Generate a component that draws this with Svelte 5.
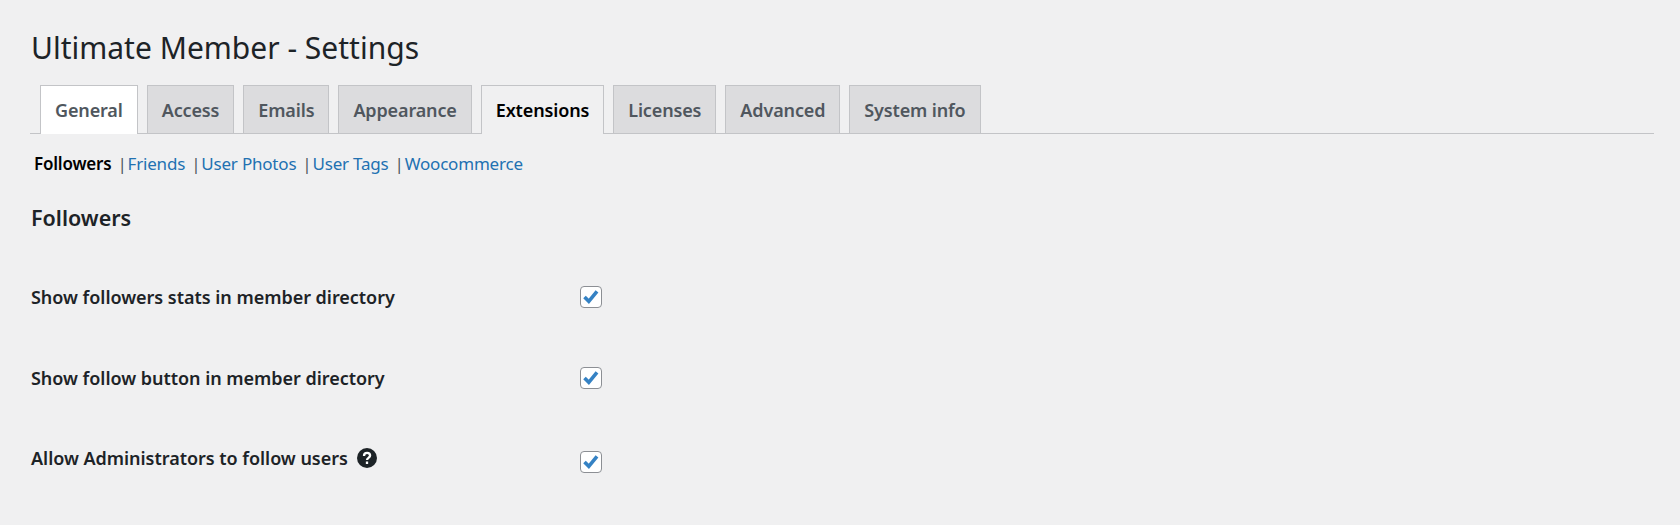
<script>
  const tabs = [
    { label: 'General', active: true },
    { label: 'Access' },
    { label: 'Emails' },
    { label: 'Appearance' },
    { label: 'Extensions', active: true, strong: true },
    { label: 'Licenses' },
    { label: 'Advanced' },
    { label: 'System info' }
  ];
  const subtabs = ['Friends', 'User Photos', 'User Tags', 'Woocommerce'];
  const fields = [
    { label: 'Show followers stats in member directory' },
    { label: 'Show follow button in member directory' },
    { label: 'Allow Administrators to follow users', help: true }
  ];
</script>

<div class="wrap">
  <h1>Ultimate Member - Settings</h1>

  <nav class="tabs">
    {#each tabs as tab}
      <a href="#tab" class="tab" class:active={tab.active} class:strong={tab.strong}>{tab.label}</a>
    {/each}
  </nav>

  <div class="subnav">
    <strong>Followers</strong>
    {#each subtabs as sub}
      <span class="sep">|</span><a href="#sub">{sub}</a>
    {/each}
  </div>

  <h2>Followers</h2>

  <div class="fields">
    {#each fields as field}
      <div class="row" class:has-help={field.help}>
        <div class="label">
          {field.label}
          {#if field.help}
            <svg class="help" viewBox="0 0 20 20" aria-hidden="true">
              <circle cx="10" cy="10" r="10" fill="#1d2327" />
              <path d="M10 15.9v-2.400M7 7.900c0-1.800 1.300-3 3.100-3s3 1.100 3 2.700c0 2.200-3.100 2.300-3.100 4.300" fill="none" stroke="#fff" stroke-width="2.300" />
            </svg>
          {/if}
        </div>
        <span class="check">
          <svg viewBox="0 0 20 20" aria-hidden="true">
            <path d="M3.500 10l4.300 4.300 8.200-10" fill="none" stroke="#3582c4" stroke-width="3.600" />
          </svg>
        </span>
      </div>
    {/each}
  </div>
</div>

<style>
  :global(body) {
    background: #f0f0f1;
    color: #1d2327;
    font-family: "Noto Sans", "Open Sans", sans-serif;
  }

  .wrap {
    height: 525px;
    overflow: hidden;
    padding: 0 26px 0 30px;
    box-sizing: border-box;
  }

  h1 {
    margin: 0;
    padding: 28px 0 0 1px;
    font-size: 30px;
    line-height: 40px;
    font-weight: 400;
  }

  .tabs {
    display: flex;
    gap: 9px;
    margin-top: 17px;
    padding-left: 10px;
    height: 48px;
    border-bottom: 1px solid #c3c4c7;
  }

  .tab {
    display: flex;
    align-items: center;
    padding: 0 14px;
    height: 48px;
    box-sizing: border-box;
    border: 1px solid #c3c4c7;
    border-bottom: none;
    background: #dcdcde;
    color: #50575e;
    font-size: 18px;
    font-weight: 600;
    letter-spacing: -0.14px;
    text-decoration: none;
  }

  .tab.active {
    height: 49px;
    background: #f0f0f1;
    color: #000;
  }

  .tab:first-child {
    background: #fff;
    color: #50575e;
  }

  .subnav {
    display: flex;
    align-items: center;
    height: 24px;
    margin-top: 17px;
    padding-left: 4px;
    font-size: 17px;
    letter-spacing: -0.2px;
  }

  .subnav strong {
    font-weight: 600;
    color: #000;
    margin-right: 6px;
  }

  .subnav a {
    color: #2271b1;
    text-decoration: none;
    margin-right: 6px;
  }

  .sep {
    color: #50575e;
    margin-right: 1px;
  }

  h2 {
    margin: 30px 0 0;
    padding-left: 1px;
    font-size: 21.500px;
    line-height: 26px;
    font-weight: 600;
  }

  .fields {
    margin-top: 25px;
  }

  .row {
    display: flex;
    align-items: center;
    height: 81px;
  }

  .row.has-help {
    height: 87px;
  }

  .label {
    width: 549px;
    margin-left: 1px;
    display: flex;
    align-items: center;
    font-size: 18px;
    font-weight: 600;
    letter-spacing: -0.03px;
  }

  .has-help .label {
    margin-bottom: 7px;
  }

  .help {
    width: 20px;
    height: 20px;
    margin-left: 9px;
  }

  .check {
    width: 22px;
    height: 22px;
    box-sizing: border-box;
    border: 1px solid #8c8f94;
    border-radius: 4px;
    background: #fff;
    display: flex;
    align-items: center;
    justify-content: center;
  }

  .check svg {
    width: 20px;
    height: 20px;
  }
</style>
